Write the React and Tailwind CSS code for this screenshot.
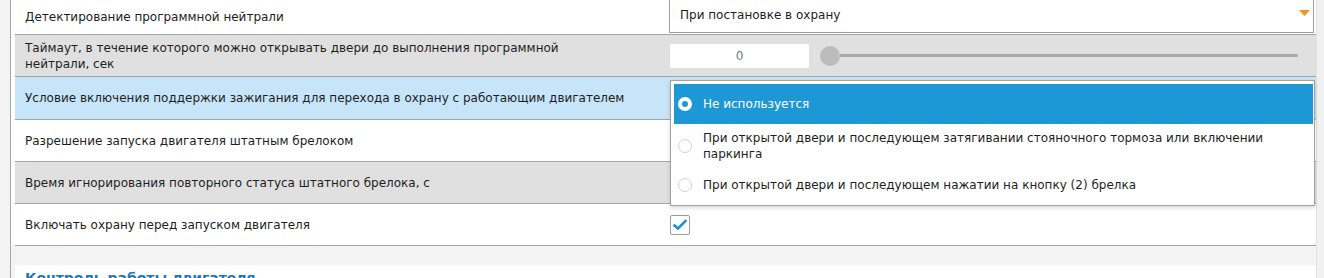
import React from "react";

const Label = ({ children }) => (
  <div className="w-[653px] shrink-0 pl-[10px] pr-4 text-[12px] leading-4 text-[#1e1e1e]">{children}</div>
);

function Radio({ checked }) {
  if (checked)
    return (
      <div className="ml-[4px] w-[14px] h-[14px] rounded-full bg-white flex items-center justify-center shrink-0">
        <div className="w-[6px] h-[6px] rounded-full bg-[#1e97d6]" />
      </div>
    );
  return <div className="ml-[4px] w-[14px] h-[14px] rounded-full bg-white border border-[#d2d2d2] shrink-0" />;
}

export default function App() {
  return (
    <div className="flex w-[1324px] h-[278px] overflow-hidden bg-[#f3f3f3] font-['DejaVu_Sans',sans-serif]">
      <div className="w-[10px] shrink-0" />
      <div className="flex-1 flex flex-col border-l border-[#a6a6a6]">
        <div className="bg-white pl-1">
          {/* Row 1 */}
          <div className="flex h-[35px] border-b border-[#a4a4a4] items-center">
            <Label>Детектирование программной нейтрали</Label>
            <div className="flex-1 h-full pl-[1px] pr-[2px] flex items-start">
              <div className="flex-1 h-[33px] border border-t-0 border-[#9c9c9c] bg-white flex items-center justify-between pl-[10px] pr-[3px]">
                <span className="text-[12px] text-[#1e1e1e] mt-[-2px]">При постановке в охрану</span>
                <svg width="11" height="6" viewBox="0 0 11 6" className="mt-[-6px]">
                  <path d="M0 0 H11 L5.5 6 Z" fill="#f7941d" />
                </svg>
              </div>
            </div>
          </div>
          {/* Row 2 */}
          <div className="flex h-[42px] border-b border-[#a4a4a4] items-center bg-[#e0e0e0]">
            <Label>
              Таймаут, в течение которого можно открывать двери до выполнения программной
              <br />
              нейтрали, сек
            </Label>
            <div className="flex-1 pl-[2px] pr-[18px] flex items-center">
              <div className="w-[139px] h-[24px] bg-white flex items-center justify-center text-[12px] text-[#6c7a89]">0</div>
              <div className="ml-[11px] w-[20px] h-[20px] rounded-full bg-[#bcbcbc] shrink-0" />
              <div className="flex-1 h-[3px] bg-[#a9a9a9] rounded-r-sm" />
            </div>
          </div>
          {/* Row 3 */}
          <div className="flex h-[43px] border-b border-[#a4a4a4] items-center bg-[#c6e5f9]">
            <Label>Условие включения поддержки зажигания для перехода в охрану с работающим двигателем</Label>
            <div className="flex-1 h-full relative">
              <div className="absolute left-[2px] top-[3px] w-[645px] z-10 bg-white border border-[#a2a2a2] pt-[3px] pb-[3px] pl-[3px] pr-[1px] shadow-[0_2px_4px_rgba(0,0,0,0.15)] text-[12px] leading-[16px]">
                <div className="h-[40px] bg-[#1e97d6] flex items-center text-white">
                  <Radio checked />
                  <span className="ml-[11px]">Не используется</span>
                </div>
                <div className="h-[43px] flex items-center text-[#1e1e1e]">
                  <Radio />
                  <span className="ml-[11px]">
                    При открытой двери и последующем затягивании стояночного тормоза или включении
                    <br />
                    паркинга
                  </span>
                </div>
                <div className="h-[35px] flex items-center text-[#1e1e1e]">
                  <Radio />
                  <span className="ml-[11px]">При открытой двери и последующем нажатии на кнопку (2) брелка</span>
                </div>
              </div>
            </div>
          </div>
          {/* Row 4 */}
          <div className="flex h-[42px] border-b border-[#a4a4a4] items-center">
            <Label>Разрешение запуска двигателя штатным брелоком</Label>
            <div className="flex-1" />
          </div>
          {/* Row 5 */}
          <div className="flex h-[42px] border-b border-[#a4a4a4] items-center bg-[#e0e0e0]">
            <Label>Время игнорирования повторного статуса штатного брелока, с</Label>
            <div className="flex-1" />
          </div>
          {/* Row 6 */}
          <div className="flex h-[42px] border-b border-[#a4a4a4] items-center">
            <Label>Включать охрану перед запуском двигателя</Label>
            <div className="flex-1 pl-[2px] flex items-center">
              <div className="w-[20px] h-[20px] border border-[#9a9a9a] rounded-[2px] bg-white flex items-center justify-center">
                <svg width="14" height="12" viewBox="0 0 14 12">
                  <path d="M1.5 6.5 L5 9.5 L12.5 2" stroke="#1e8fd5" strokeWidth="2.6" fill="none" strokeLinecap="square" />
                </svg>
              </div>
            </div>
          </div>
        </div>
        <div className="h-[19px] shrink-0" />
        <div className="ml-1 bg-white pl-[10px] pt-[3px] flex-1">
          <div className="text-[14px] font-bold text-[#1b76bd] leading-5">Контроль работы двигателя</div>
        </div>
      </div>
      <div className="w-[8px] shrink-0 bg-[#f1f1f1] border-l border-[#e2e2e2]" />
    </div>
  );
}
